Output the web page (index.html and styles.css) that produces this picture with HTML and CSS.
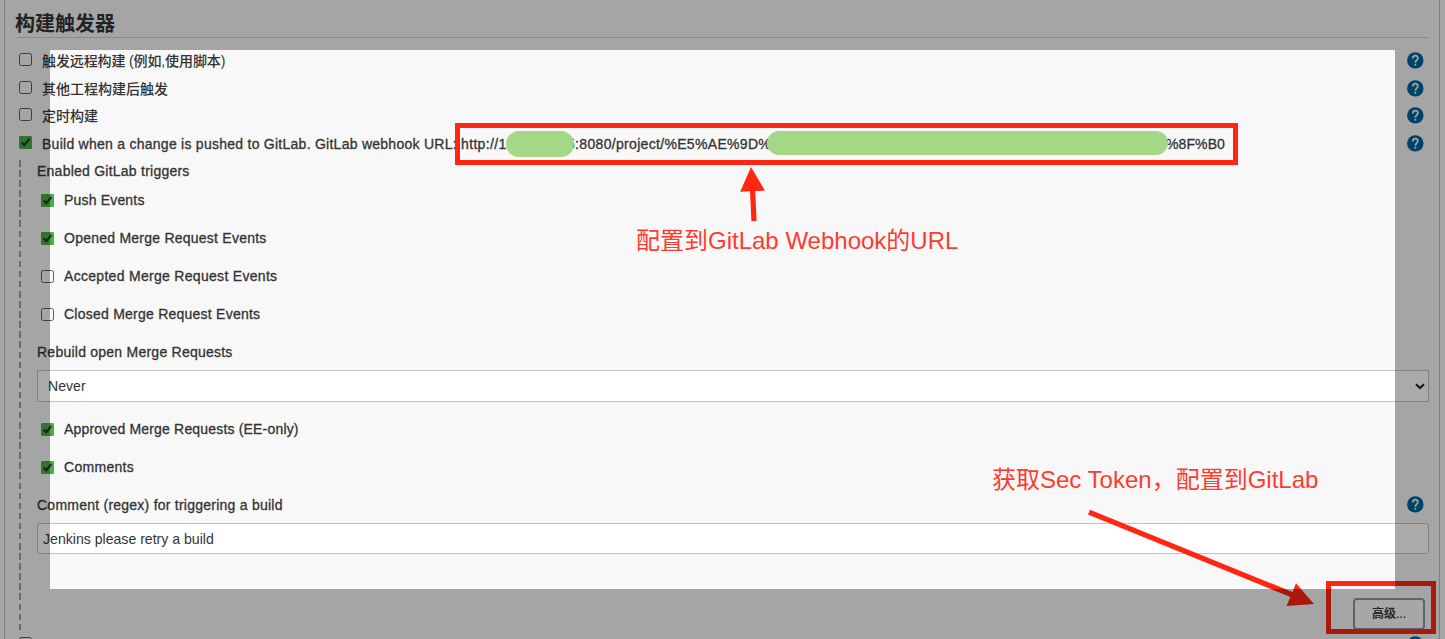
FILE: index.html
```html
<!DOCTYPE html>
<html lang="zh-CN">
<head>
<meta charset="utf-8">
<title>构建触发器</title>
<link rel="stylesheet" href="styles.css">
</head>
<body>
<svg width="0" height="0" class="defs">
  <symbol id="help" viewBox="0 0 17 17"><circle cx="8.3" cy="8.4" r="8.2" fill="#0063a0"/><path d="M5.8 6.5C5.8 2.8 10.9 2.8 10.9 6.1C10.9 8.1 8.4 8.1 8.3 10.6" fill="none" stroke="#f8f8f8" stroke-width="1.7"/><rect x="7.4" y="11.8" width="1.8" height="1.8" fill="#f8f8f8"/></symbol>
  <symbol id="tick" viewBox="0 0 13 13"><rect width="13" height="13" rx="1.2" fill="#4aae46"/><path d="M2.6 6.6L5.2 9.2L10.4 3" fill="none" stroke="#2d2d2d" stroke-width="2.1"/></symbol>
</svg>
<main class="scene">
  <section class="panel">
    <h2 class="title">构建触发器</h2>
    <div class="row"><i class="box"></i><span class="text cjk remote">触发远程构建 (例如,使用脚本)</span><svg class="help"><use href="#help"/></svg></div>
    <div class="row"><i class="box"></i><span class="text cjk">其他工程构建后触发</span><svg class="help"><use href="#help"/></svg></div>
    <div class="row short"><i class="box"></i><span class="text cjk">定时构建</span><svg class="help"><use href="#help"/></svg></div>
    <div class="row"><svg class="tick"><use href="#tick"/></svg><span class="text lead">Build when a change is pushed to GitLab. GitLab webhook URL:</span><span class="text host">http://1</span><span class="text path">5:8080/project/%E5%AE%9D%</span><span class="text tail">%8F%B0</span><svg class="help"><use href="#help"/></svg></div>
    <div class="group">
      <div class="label first"><span class="text">Enabled GitLab triggers</span></div>
      <div class="check"><svg class="tick"><use href="#tick"/></svg><span class="text tight">Push Events</span></div>
      <div class="check"><svg class="tick"><use href="#tick"/></svg><span class="text">Opened Merge Request Events</span></div>
      <div class="check"><i class="box"></i><span class="text wide">Accepted Merge Request Events</span></div>
      <div class="check"><i class="box"></i><span class="text">Closed Merge Request Events</span></div>
      <div class="label rebuild"><span class="text">Rebuild open Merge Requests</span></div>
      <div class="field select"><span>Never</span><svg class="caret" viewBox="0 0 10 7"><path d="M1 1.2L5 5L9 1.2" fill="none" stroke="#222" stroke-width="2"/></svg></div>
      <div class="check"><svg class="tick"><use href="#tick"/></svg><span class="text tight">Approved Merge Requests (EE-only)</span></div>
      <div class="check"><svg class="tick"><use href="#tick"/></svg><span class="text wide">Comments</span></div>
      <div class="label comment"><span class="text">Comment (regex) for triggering a build</span><svg class="help"><use href="#help"/></svg></div>
      <div class="field input"><span>Jenkins please retry a build</span></div>
      <div class="actions"><button class="advanced">高级...</button></div>
    </div>
    <div class="row last"><i class="box"></i><svg class="help"><use href="#help"/></svg></div>
  </section>
  <div class="mask mask-host"></div>
  <div class="mask mask-path"></div>
  <div class="frame frame-url"></div>
  <div class="frame frame-button"></div>
  <svg class="arrows" width="1445" height="639">
    <g fill="#ff2712" stroke="none">
      <path d="M751 167L765 190.6L755.2 191L756.6 220.8L751.4 221.2L750 191.3L740.2 191.8Z"/>
      <path d="M1090 509.8L1292.5 592L1296 583.2L1314 604L1286.5 606L1290.3 597L1088 514.4Z"/>
    </g>
  </svg>
  <p class="note note-url">配置到GitLab Webhook的URL</p>
  <p class="note note-token">获取Sec Token，配置到GitLab</p>
  <div class="spotlight"></div>
</main>
</body>
</html>
```

FILE: styles.css
```css
* { box-sizing: border-box; }
body { margin: 0; background: #f8f8f8; }
.defs { position: absolute; }
.scene {
  position: relative; width: 1445px; height: 639px; overflow: hidden;
  font: 14px/20px "Liberation Sans", "Noto Sans CJK SC", sans-serif; color: #333;
}
.panel {
  margin: 0 5px 0 4px; height: 660px; padding: 0 10px;
  border-left: 1px solid #bcbcbc; border-right: 1px solid #bcbcbc;
}
.title {
  margin: 0 0 8px; height: 38px; padding-top: 8px; border-bottom: 1px solid #d2d2d2;
  font: bold 20px/30px "Noto Sans CJK SC", sans-serif;
}
.row { display: flex; align-items: center; height: 28px; padding-left: 4px; }
.row.short { height: 27px; }
.box { flex: none; width: 13px; height: 13px; border: 1px solid #5c5c5c; border-radius: 2.5px; }
.tick { flex: none; width: 13px; height: 13px; }
.row > .box, .row > .tick { margin: 0 10px 1px 0; }
.row.short > .box { margin-bottom: 2px; }
.text { white-space: nowrap; letter-spacing: .24px; -webkit-text-stroke: .3px #333; }
.row .text { padding-top: 1px; }
.text.tight { letter-spacing: .18px; }
.text.wide { letter-spacing: .3px; }
.text.cjk { letter-spacing: 0; font-weight: 500; -webkit-text-stroke: 0; }
.text.remote { letter-spacing: -.12px; }
.text.lead { width: 419px; letter-spacing: .26px; }
.text.host { width: 106px; letter-spacing: .35px; }
.text.path { width: 599px; letter-spacing: .32px; }
.text.tail { letter-spacing: .1px; }
.help { flex: none; width: 17px; height: 17px; margin: 0 5px 0 auto; }
.group {
  padding-left: 22px; height: 473px;
  background: repeating-linear-gradient(#a0a0a0 0 6.5px, transparent 6.5px 10.08px) 4px 3px / 2px 470px no-repeat;
}
.label { display: flex; align-items: center; height: 38px; }
.label.first { height: 24px; padding-top: 4px; }
.label.rebuild { height: 37px; }
.label.comment { height: 37px; }
.check { display: flex; align-items: center; gap: 10px; height: 38px; padding-left: 4px; }
.check .text { padding-bottom: 1px; }
.field {
  display: flex; align-items: center; height: 31px; background: #fff;
  border: 1px solid #c3c3c3; font-size: 14.1px;
}
.select { height: 32px; padding: 0 3px 0 10px; justify-content: space-between; margin-bottom: 8px; }
.caret { width: 10px; height: 7px; }
.input { border-radius: 3px; padding-left: 5px; }
.actions { display: flex; justify-content: flex-end; padding: 44px 4px 0 0; }
.advanced {
  width: 72px; height: 32px; padding: 0 0 3px; border: 2px solid #8797a3; border-radius: 4px;
  background: #fbfbfb; color: #333; font: 500 12px "Liberation Sans", "Noto Sans CJK SC", sans-serif;
  -webkit-text-stroke: .2px #333;
}
.mask { position: absolute; background: #a4d888; border-radius: 13px; }
.mask-host { left: 505.5px; top: 131px; width: 68.5px; height: 26px; }
.mask-path { left: 766.5px; top: 131px; width: 401px; height: 24px; border-radius: 12px; }
.frame { position: absolute; border: 5px solid #ff2712; }
.frame-url { left: 455px; top: 123px; width: 783px; height: 42px; }
.frame-button { left: 1326px; top: 581px; width: 110px; height: 53px; }
.arrows { position: absolute; left: 0; top: 0; }
.note {
  position: absolute; margin: 0; white-space: nowrap; color: #ff3b30;
  font: 24px/32px "Liberation Sans", "Noto Sans CJK SC", sans-serif;
}
.note-url { left: 636px; top: 225px; }
.note-token { left: 992px; top: 464px; }
.spotlight {
  position: absolute; left: 50px; top: 50px; width: 1345px; height: 539px;
  box-shadow: 0 0 0 60px rgba(0, 0, 0, .335);
}
```
